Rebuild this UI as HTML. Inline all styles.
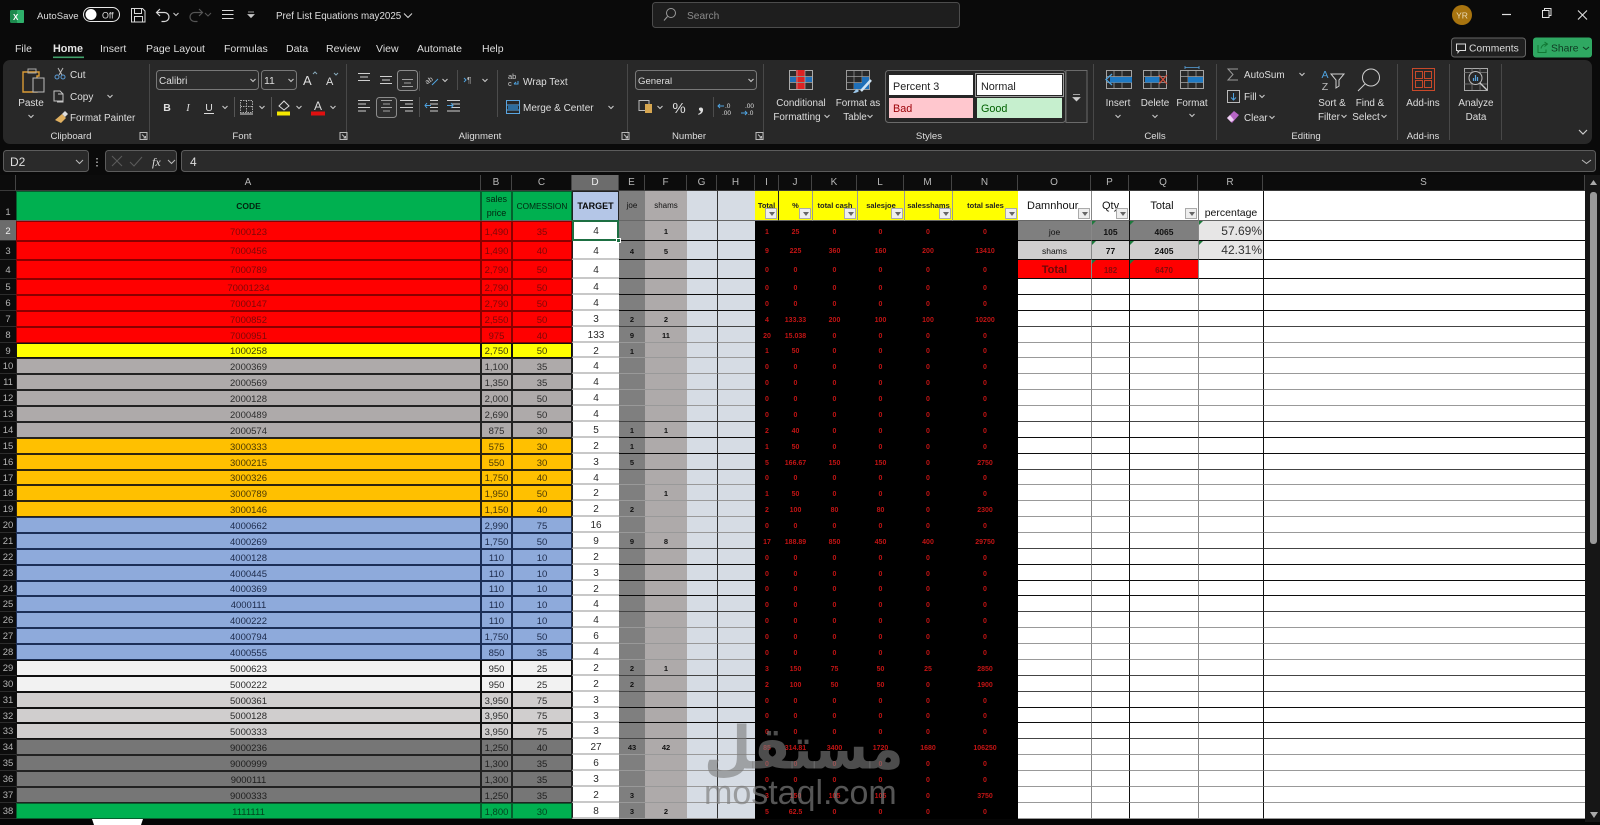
<!DOCTYPE html>
<html><head><meta charset="utf-8"><title>Pref List Equations may2025</title>
<style>
html,body{margin:0;padding:0;background:#0a0a0a;width:1600px;height:825px;overflow:hidden;font-family:"Liberation Sans",sans-serif}
svg{position:absolute;left:0;top:0}
svg text{font-family:"Liberation Sans",sans-serif;fill:#dedede;font-size:10.2px}
.m{text-anchor:middle}
.r{position:absolute;left:0;width:1585px;display:grid;grid-template-columns:16px 465px 31px 60px 47px 26px 42px 30px 38px 24px 33px 45px 47px 48px 66px 73px 38px 69px 65px 322px}
.r i{font-style:normal;display:flex;align-items:center;justify-content:center;overflow:hidden;box-sizing:border-box;min-width:0;position:relative;white-space:nowrap;border-bottom:1px solid var(--b);font-size:9.5px}
.k{--b:#0c0c0c}.d{--b:#444}.g{--b:#999}
.r i:nth-child(1){background:#0c0c0c;color:#b4b4b4;border-bottom:1px solid #2c2c2c;font-size:9.5px;padding-top:2px}
.r i:nth-child(2),.r i:nth-child(3),.r i:nth-child(4){background:var(--f);color:var(--t);border:1px solid var(--e);padding-top:2px}
.r i:nth-child(5){background:#fff;color:#2a2a2a;font-size:10px;border-bottom:2px solid #c8c8c8;border-left:1px solid #222;padding-top:3px}
.r i:nth-child(6){background:#7f7f7f;color:#111;font-size:7.5px;font-weight:bold;padding-top:2px}
.r i:nth-child(7){background:#aeaaaa;color:#111;font-size:7.5px;font-weight:bold;padding-top:2px}
.r i:nth-child(8){background:#d6dce4}
.r i:nth-child(9){background:#d6dce4;border-left:1px solid #333}
.r i:nth-child(n+10):nth-child(-n+15){background:#000;color:#c21414;font-size:7px;font-weight:bold;border-bottom:0;padding-top:2px}
.r i:nth-child(n+16){background:#fff;color:#111;padding-top:2px}
.r i:nth-child(17),.r i:nth-child(19){border-left:1px solid #888}
.r i:nth-child(18),.r i:nth-child(20){border-left:1px solid #111}
.re{--f:#f00;--t:#7c0808;--e:#8a0000}
.ye{--f:#ff0;--t:#3c3c08;--e:#111}
.gr{--f:#aeaaaa;--t:#2c2c2c;--e:#222}
.am{--f:#ffc000;--t:#4a3804;--e:#2c2410}
.bl{--f:#8eaadb;--t:#1c2a4a;--e:#1c2f57}
.li{--f:#f2f2f2;--t:#2a2a2a;--e:#111}
.lg{--f:#d0cece;--t:#2a2a2a;--e:#111}
.dg{--f:#767676;--t:#1e1e1e;--e:#222}
.gn{--f:#00b050;--t:#03451f;--e:#05602e}
.c i{border-bottom:1px solid #3a3a3a!important;background:#0c0c0c!important;color:#b8b8b8!important;font-size:10px!important;font-weight:normal!important;border-top:0!important;border-left:0!important;border-right:1px solid #444!important;padding:0!important}
.h i{border-bottom:1px solid #666!important;padding-top:0!important}
.f{position:absolute;right:1px;bottom:1px;width:12px;height:11px;background:#eee;border:1px solid #aaa;box-sizing:border-box}
.f:after{content:"";position:absolute;left:3px;top:3px;border:3px solid transparent;border-top:4px solid #666;border-bottom:0}
.t:before{content:"";position:absolute;left:0;top:0;border-top:4px solid #1d7a3c;border-right:4px solid transparent}
.wm{position:absolute;left:704px;white-space:nowrap;pointer-events:none}
</style></head><body>

<svg width="1600" height="825" viewBox="0 0 1600 825">
<defs><path id="c" d="M-2.500-1l2.500 2.500 2.500-2.500" fill="none" stroke="#c8c8c8" stroke-width="1.100"/></defs>
<!-- title bar -->
<rect x="10" y="10" width="14" height="13" rx="1.5" fill="#1d8a4e"/><rect x="17" y="10" width="7" height="13" rx="1" fill="#2fb06b"/>
<text x="13" y="20" style="font-size:8px;font-weight:bold;fill:#fff">X</text>
<text x="37" y="19" style="font-size:9.6px">AutoSave</text>
<rect x="83.500" y="7.500" width="36" height="14" rx="7" fill="none" stroke="#e8e8e8"/><circle cx="91" cy="14.500" r="5.500" fill="#fff"/>
<text x="102" y="18.500" style="font-size:8.800px">Off</text>
<path d="M131.500 8.500h11l2.500 2.500v11h-13.500zM134.500 8.500v5h7v-5M134.500 22v-5.500h8v5.500" fill="none" stroke="#d8d8d8"/>
<path d="M160 9l-3.500 3.500 3.500 3.500M156.500 12.500h8a4.500 4.500 0 0 1 0 9h-3" fill="none" stroke="#d8d8d8" stroke-width="1.200"/>
<use href="#c" x="176" y="14"/>
<path d="M199 9l3.500 3.500-3.500 3.500M202.500 12.500h-8a4.500 4.500 0 0 0 0 9h3" fill="none" stroke="#555" stroke-width="1.200"/>
<path d="M205 13l3 3 3-3" fill="none" stroke="#555"/>
<path d="M222 10.500h11.500M222 14.500h11.500M222 18.500h11.500" stroke="#d8d8d8" fill="none"/>
<path d="M248 12h6M248 14.500l3 3 3-3z" stroke="#c8c8c8" fill="#c8c8c8" stroke-width=".8"/>
<text x="276" y="19" style="font-size:9.800px">Pref List Equations may2025</text>
<path d="M404 13.500l4 4 4-4" fill="none" stroke="#d8d8d8"/>
<rect x="652.500" y="2.500" width="307" height="25" rx="3" fill="#1e1e1e" stroke="#4c4c4c"/>
<circle cx="671" cy="13" r="4.500" fill="none" stroke="#9a9a9a"/><path d="M667.500 16.500l-3.500 4" stroke="#9a9a9a"/>
<text x="687" y="19" style="font-size:10.200px;fill:#8c8c8c">Search</text>
<circle cx="1462" cy="15" r="10" fill="#a8740f"/><text x="1462" y="18.500" class="m" style="font-size:8.500px;fill:#eadbb8">YR</text>
<path d="M1502 14.500h9" stroke="#e0e0e0" stroke-width="1.200"/>
<path d="M1542.500 10.500h6.500v7h-6.500zM1544.500 10.500v-2h6.500v7h-2" fill="none" stroke="#e0e0e0"/>
<path d="M1578 10.500l9 9M1587 10.500l-9 9" stroke="#e0e0e0" stroke-width="1.100"/>
<!-- tabs -->
<g style="font-size:10.500px">
<text x="15" y="52" style="font-size:10.500px">File</text>
<text x="53" y="52" style="font-size:10.800px;font-weight:bold;fill:#e6e6e6">Home</text>
<text x="100" y="52" style="font-size:10.500px">Insert</text>
<text x="146" y="52" style="font-size:10.500px">Page Layout</text>
<text x="224" y="52" style="font-size:10.500px">Formulas</text>
<text x="286" y="52" style="font-size:10.500px">Data</text>
<text x="326" y="52" style="font-size:10.500px">Review</text>
<text x="376" y="52" style="font-size:10.500px">View</text>
<text x="417" y="52" style="font-size:10.500px">Automate</text>
<text x="482" y="52" style="font-size:10.500px">Help</text>
</g>
<rect x="53" y="56.500" width="31" height="1.600" fill="#41a06a"/>
<rect x="1451.500" y="38" width="74" height="19" rx="3" fill="#202020" stroke="#666"/>
<path d="M1456.500 44h9v6.500h-6l-1.500 2v-2h-1.500z" fill="none" stroke="#ddd"/><text x="1469" y="51.500" style="font-size:10.300px">Comments</text>
<rect x="1533" y="37.500" width="59" height="20" rx="3" fill="#2fa862"/>
<path d="M1538 45v7.500h8v-3M1541 48.500c.5-3 3-4.500 5.500-4.500M1544.500 42l3 2-3 2.500" fill="none" stroke="#173"/>
<text x="1551" y="51.500" style="font-size:10.300px;fill:#0f3a22">Share</text>
<path d="M1583 47l3 2.500 3-2.500" fill="none" stroke="#0f3a22"/>
<!-- ribbon -->
<rect x="3" y="60" width="1589" height="84" rx="7" fill="#282828"/>
<g stroke="#484848"><path d="M149.500 64v76M346.500 64v76M627.500 64v76M763.500 64v76M1093.500 64v76M1216.500 64v76M1397.500 64v76M1449.500 64v76M1501.500 64v76"/></g>
<!-- clipboard -->
<path d="M25 72h14v4h-2v16h-14v-20z" fill="none" stroke="#d99a35" stroke-width="1.400"/>
<rect x="28" y="69" width="8" height="4" fill="none" stroke="#aaa"/>
<rect x="33" y="78" width="11" height="14" fill="#2a2a2a" stroke="#bdbdbd"/>
<text x="31" y="106" class="m" style="font-size:10px">Paste</text><use href="#c" x="31" y="116"/>
<path d="M58 68l4 7M63 68l-4 7" stroke="#bbb" fill="none"/><circle cx="57" cy="77" r="2" fill="none" stroke="#5b9bd5"/><circle cx="63" cy="77" r="2" fill="none" stroke="#5b9bd5"/>
<text x="70" y="78" style="font-size:10px">Cut</text>
<path d="M54 91h6l3 3v7h-9zM58 94h5v8h-6" fill="none" stroke="#c4c4c4"/>
<text x="70" y="100" style="font-size:10px">Copy</text><use href="#c" x="110" y="96"/>
<path d="M55 120l7-6 4 4-5 5z" fill="#e0b060"/><path d="M62 114l3-3 3 3-3 3" fill="#ddd"/>
<text x="70" y="121" style="font-size:9.900px">Format Painter</text>
<text x="71" y="139" class="m" style="font-size:9.600px">Clipboard</text>
<g id="lc" fill="none" stroke="#bbb"><path d="M140 132.500h7v7h-7zM142 134.500l3.500 3.500M145.500 136v2h-2"/></g>
<!-- font -->
<rect x="156.500" y="70.500" width="102" height="19" rx="3" fill="#2c2c2c" stroke="#787878"/>
<text x="159" y="84" style="font-size:10px">Calibri</text><use href="#c" x="253" y="80"/>
<rect x="261.500" y="70.500" width="35" height="19" rx="3" fill="#2c2c2c" stroke="#787878"/>
<text x="264" y="84" style="font-size:10.500px">11</text><use href="#c" x="291" y="80"/>
<text x="303" y="85" style="font-size:13px">A</text><path d="M313 74l2-2 2 2" stroke="#8ab" fill="none"/>
<text x="326" y="85" style="font-size:11px">A</text><path d="M334 73l2 2 2-2" stroke="#8ab" fill="none"/>
<text x="167" y="111" class="m" style="font-size:10.500px;font-weight:bold">B</text>
<text x="188" y="111" class="m" style="font-size:10.500px;font-style:italic;font-family:'Liberation Serif'">I</text>
<text x="209" y="111" class="m" style="font-size:10.500px">U</text><path d="M204 113.500h10" stroke="#ddd"/><use href="#c" x="225" y="107"/>
<path d="M234.500 97v20M271.500 97v20" stroke="#555"/>
<path d="M240.500 100.500h12v12h-12zM246.500 100.500v12M240.500 106.500h12" stroke="#aaa" stroke-dasharray="1.500 1" fill="none"/><path d="M240 114h13" stroke="#ddd"/>
<use href="#c" x="262" y="107"/>
<path d="M279 106l5-5 5 5-5 4z" fill="none" stroke="#ddd"/><rect x="277" y="111.500" width="13" height="4" fill="#f5e800"/><use href="#c" x="299" y="107"/>
<text x="318" y="110" class="m" style="font-size:12px">A</text><rect x="311" y="111.500" width="14" height="4" fill="#e01010"/><use href="#c" x="333" y="107"/>
<text x="242" y="139" class="m" style="font-size:9.600px">Font</text>
<use href="#lc" x="200"/>
<!-- align -->
<g stroke="#cfcfcf" fill="none">
<path d="M358 73.500h12M360 77h8M358 80.500h12"/>
<path d="M380 76.500h12M382 80h8M380 83.500h12"/>
<path d="M402 79.500h11M404 83h7M402 86.500h11"/>
<path d="M358 100.500h12M358 104h8M358 107.500h12M358 111h8"/>
<path d="M381 100.500h11M383 104h7M381 107.500h11M383 111h7"/>
<path d="M400 100.500h13M405 104h8M400 107.500h13M405 111h8"/>
<path d="M430 100.500h8M430 104h8M430 107.500h8M430 111h8M447 100.500h13M452 104h8M452 107.500h8M447 111h13"/>
</g>
<rect x="397.500" y="70.500" width="20" height="20" rx="3" fill="#3a3a3a" fill-opacity=".3" stroke="#8c8c8c"/>
<rect x="376.500" y="97.500" width="20" height="20" rx="3" fill="#3a3a3a" fill-opacity=".3" stroke="#8c8c8c"/>
<path d="M425 105.500h6M427 103l-2 2.500 2 2.500M447 105.500h6M451 103l2 2.500-2 2.500" stroke="#4fa3e0" fill="none"/>
<path d="M419.500 71v20M419.500 97v20M457.500 70v20M497.500 70v47" stroke="#4c4c4c"/>
<text x="425" y="82" style="font-size:7px;fill:#cfcfcf" transform="rotate(-35 430 80)">ab</text><path d="M432 85l6-6" stroke="#4fa3e0"/><use href="#c" x="445" y="80"/>
<path d="M464 78l2 2-2 2" stroke="#4fa3e0" fill="none"/><text x="467" y="83" style="font-size:8px;fill:#bbb">¶</text><use href="#c" x="485" y="80"/>
<text x="508" y="79" style="font-size:7.500px;fill:#cfcfcf">ab</text><text x="508" y="86" style="font-size:7.500px;fill:#cfcfcf">c</text><path d="M514 84h4v-3M514 84l2-2" stroke="#4fa3e0" fill="none"/>
<text x="523" y="85" style="font-size:10px">Wrap Text</text>
<rect x="506.500" y="100.500" width="13" height="13" fill="none" stroke="#5aa5e0"/><path d="M506 105h13M506 110h13" stroke="#5aa5e0"/><rect x="508" y="105" width="10" height="5" fill="#2d6d9f"/>
<text x="523" y="111" style="font-size:10px">Merge &amp; Center</text><use href="#c" x="611" y="107"/>
<text x="480" y="139" class="m" style="font-size:9.600px">Alignment</text>
<use href="#lc" x="482"/>
<!-- number -->
<rect x="635.500" y="70.500" width="121" height="19" rx="3" fill="#2c2c2c" stroke="#787878"/>
<text x="638" y="84" style="font-size:9.600px">General</text><use href="#c" x="751" y="80"/>
<rect x="639" y="100.500" width="10" height="10" fill="none" stroke="#bbb"/><rect x="645" y="104" width="7" height="9" fill="#d6a650"/>
<use href="#c" x="660" y="107"/>
<text x="679" y="113" class="m" style="font-size:15px">%</text>
<text x="701" y="111" class="m" style="font-size:24px;font-weight:bold;font-family:'Liberation Serif'">,</text>
<path d="M713.500 97v20" stroke="#4c4c4c"/>
<text x="725" y="108" style="font-size:6.500px">.0</text><text x="722" y="115" style="font-size:6.500px">.00</text><path d="M718 106h6M720 104l-2 2 2 2" stroke="#4fa3e0" fill="none"/>
<text x="745" y="108" style="font-size:6.500px">.00</text><text x="748" y="115" style="font-size:6.500px">.0</text><path d="M741 113h6M745 111l2 2-2 2" stroke="#4fa3e0" fill="none"/>
<text x="689" y="139" class="m" style="font-size:9.600px">Number</text>
<use href="#lc" x="616"/>
<!-- styles -->
<rect x="789.500" y="70.500" width="23" height="19" fill="#2c2c2c" stroke="#aaa"/>
<rect x="796" y="70" width="9" height="6" fill="#d22"/><rect x="790" y="77" width="22" height="5" fill="#1f6fb8"/><rect x="796" y="77" width="9" height="5" fill="#d22"/><rect x="796" y="83" width="9" height="6" fill="#d22"/>
<path d="M797 70v19M805 70v19M790 76.500h22M790 82.500h22" stroke="#aaa" stroke-width=".7"/>
<text x="801" y="106" class="m" style="font-size:9.900px">Conditional</text>
<text x="797" y="120" class="m" style="font-size:9.900px">Formatting</text><use href="#c" x="827" y="116"/>
<rect x="846.500" y="70.500" width="23" height="19" fill="none" stroke="#9a9a9a"/><path d="M854 70v19M862 70v19M846 76.500h23M846 82.500h23" stroke="#9a9a9a" stroke-width=".7"/>
<rect x="862" y="77" width="7" height="12" fill="#1f6fb8"/><rect x="854" y="83" width="8" height="6" fill="#1f6fb8"/>
<path d="M871 80l-10 11" stroke="#cfe4f5" stroke-width="2.500"/><path d="M857 89c-2 1-3 3-4 4 3 0 5-1 6-2z" fill="#9cc7ea"/>
<text x="858" y="106" class="m" style="font-size:9.900px">Format as</text>
<text x="855" y="120" class="m" style="font-size:9.900px">Table</text><use href="#c" x="870" y="116"/>
<rect x="885.500" y="70.500" width="180" height="52" rx="3" fill="#262626" stroke="#6a6a6a"/>
<rect x="1066" y="70.500" width="21" height="52" fill="#2a2a2a" stroke="#6a6a6a"/>
<path d="M1073 94.500h7M1073 97.500h7l-3.500 3.500z" stroke="#ccc" fill="#ccc" stroke-width=".7"/>
<rect x="889" y="75" width="84" height="20" fill="#fff"/>
<rect x="975.500" y="73.500" width="88" height="23" fill="none" stroke="#9c9c9c"/>
<rect x="977" y="75" width="85" height="20" fill="#fff"/>
<rect x="889" y="98" width="84" height="20" fill="#ffc7ce"/>
<rect x="977" y="98" width="85" height="20" fill="#c6efce"/>
<text x="893" y="90" style="font-size:10.800px;fill:#222">Percent 3</text>
<text x="981" y="90" style="font-size:10.800px;fill:#222">Normal</text>
<text x="893" y="112" style="font-size:10.800px;fill:#9c0006">Bad</text>
<text x="981" y="112" style="font-size:10.800px;fill:#006100">Good</text>
<text x="929" y="139" class="m" style="font-size:9.600px">Styles</text>
<!-- cells -->
<rect x="1106.500" y="70.500" width="25" height="18" fill="none" stroke="#a4a4a4"/><path d="M1114 70v18M1122 70v18M1106 76.500h25M1106 82.500h25" stroke="#a4a4a4" stroke-width=".7"/>
<rect x="1110" y="77" width="22" height="5.500" fill="#1f7ac4"/><path d="M1112 74l-6 5.500 6 5.500" fill="none" stroke="#4fa3e0" stroke-width="1.300"/>
<text x="1118" y="106" class="m" style="font-size:9.900px">Insert</text><use href="#c" x="1118" y="116"/>
<rect x="1143.500" y="70.500" width="23" height="18" fill="none" stroke="#a4a4a4"/><path d="M1151 70v18M1159 70v18M1143 76.500h23M1143 82.500h23" stroke="#a4a4a4" stroke-width=".7"/>
<rect x="1145" y="77" width="14" height="5.500" fill="#1f7ac4"/><path d="M1159 75l8 9M1167 75l-8 9" stroke="#d8503c" stroke-width="1.200"/>
<text x="1155" y="106" class="m" style="font-size:9.900px">Delete</text><use href="#c" x="1155" y="116"/>
<path d="M1185 67.500h14M1185 66v3M1199 66v3" stroke="#5aa5e0" stroke-width=".8"/>
<rect x="1180.500" y="70.500" width="23" height="18" fill="none" stroke="#a4a4a4"/><path d="M1188 70v18M1196 70v18M1180 76.500h23M1180 82.500h23" stroke="#a4a4a4" stroke-width=".7"/>
<rect x="1188" y="77" width="15" height="5.500" fill="#1f7ac4"/>
<text x="1192" y="106" class="m" style="font-size:9.900px">Format</text><use href="#c" x="1192" y="115"/>
<text x="1155" y="139" class="m" style="font-size:9.600px">Cells</text>
<!-- editing -->
<path d="M1238 69h-10l5 5.500-5 5.500h10" fill="none" stroke="#9a9a9a"/>
<text x="1244" y="78" style="font-size:9.900px">AutoSum</text><use href="#c" x="1302" y="74"/>
<rect x="1227.500" y="90.500" width="12" height="12" fill="none" stroke="#bbb"/><path d="M1233.500 93v7M1231 97.500l2.500 2.500 2.500-2.500" fill="none" stroke="#4fa3e0"/>
<text x="1244" y="100" style="font-size:9.900px">Fill</text><use href="#c" x="1262" y="96"/>
<path d="M1227 118l7-7 5 4-7 8z" fill="#b765c5"/><path d="M1231 122l-4-4 3-3 4 5z" fill="#eecff2"/>
<text x="1244" y="121" style="font-size:9.900px">Clear</text><use href="#c" x="1272" y="117"/>
<text x="1325" y="78" class="m" style="font-size:10.500px;fill:#4fa3e0">A</text><text x="1325" y="90" class="m" style="font-size:10.500px;fill:#bbb">Z</text>
<path d="M1331 74h13l-5 6v6l-3 2v-8z" fill="none" stroke="#cfcfcf"/>
<text x="1332" y="106" class="m" style="font-size:9.900px">Sort &amp;</text>
<text x="1329" y="120" class="m" style="font-size:9.900px">Filter</text><use href="#c" x="1344" y="116"/>
<circle cx="1371" cy="77.500" r="8.500" fill="none" stroke="#cfcfcf"/><path d="M1365 84l-7 7" stroke="#cfcfcf"/>
<text x="1370" y="106" class="m" style="font-size:9.900px">Find &amp;</text>
<text x="1366" y="120" class="m" style="font-size:9.900px">Select</text><use href="#c" x="1384" y="116"/>
<text x="1306" y="139" class="m" style="font-size:9.600px">Editing</text>
<!-- add-ins -->
<rect x="1412.500" y="68.500" width="22" height="22" fill="none" stroke="#c8492a"/><rect x="1415.500" y="71.500" width="7" height="7" fill="none" stroke="#c8492a"/><rect x="1424.500" y="71.500" width="7" height="7" fill="none" stroke="#c8492a"/><rect x="1415.500" y="80.500" width="7" height="7" fill="none" stroke="#c8492a"/><rect x="1424.500" y="80.500" width="7" height="7" fill="none" stroke="#c8492a"/>
<text x="1423" y="106" class="m" style="font-size:9.900px">Add-ins</text>
<text x="1423" y="139" class="m" style="font-size:9.600px">Add-ins</text>
<rect x="1464.500" y="68.500" width="23" height="22" fill="none" stroke="#a8a8a8"/><path d="M1464 72.500h23M1464 84h23M1472 68v22M1480 68v22" stroke="#808080" stroke-width=".7"/>
<circle cx="1475.500" cy="78" r="6.500" fill="#282828" stroke="#bbb"/><path d="M1473.500 81v-3M1475.500 81v-6M1477.500 81v-4" stroke="#5aa5e0" stroke-width="1.200"/><path d="M1480 83l7 7" stroke="#ccc" stroke-width="1.300"/>
<text x="1476" y="106" class="m" style="font-size:9.900px">Analyze</text>
<text x="1476" y="120" class="m" style="font-size:9.900px">Data</text>
<path d="M1579 130l4 4 4-4" fill="none" stroke="#ccc" stroke-width="1.200"/>
<!-- formula bar -->
<rect x="3.500" y="150.500" width="85" height="21" rx="3" fill="#2a2a2a" stroke="#5c5c5c"/>
<text x="10" y="166" style="font-size:12px">D2</text><path d="M76 160l3.500 3.500 3.500-3.500" fill="none" stroke="#bbb"/>
<path d="M97 158v1.500M97 161.500v1.500M97 165v1.500" stroke="#ccc" stroke-width="1.300"/>
<rect x="105.500" y="150.500" width="71" height="21" rx="3" fill="#2a2a2a" stroke="#5c5c5c"/>
<path d="M112 156l10 10M122 156l-10 10" stroke="#5c5c5c"/><path d="M130 162l4 4 8-9" fill="none" stroke="#5c5c5c"/>
<text x="152" y="166" style="font-size:12px;font-style:italic;font-family:'Liberation Serif';fill:#ddd">fx</text><path d="M168 160l3.500 3.500 3.500-3.500" fill="none" stroke="#bbb"/>
<rect x="181.500" y="150.500" width="1414" height="21" rx="3" fill="#2a2a2a" stroke="#5c5c5c"/>
<text x="190" y="166" style="font-size:12px">4</text>
<path d="M1582 160l4.500 3.500 4.500-3.500" fill="none" stroke="#bbb"/>
<!-- corner + scrollbar -->
<path d="M14 179v10h-9z" fill="#777"/>
<rect x="1585" y="175" width="15" height="647" fill="#161616"/>
<path d="M1593.500 180l3.500 5h-7z" fill="#aaa"/>
<rect x="1590" y="192" width="7" height="352" rx="3" fill="#9a9a9a"/>
<path d="M1590 812h8l-4 6z" fill="#aaa"/>
<rect x="0" y="819" width="1585" height="6" fill="#050505"/>
<rect x="1585" y="822" width="15" height="3" fill="#050505"/>
<path d="M92 819h51l-2 6h-47z" fill="#fff"/>
</svg>

<div class="r c" style="top:175px;height:16px"><i></i><i>A</i><i>B</i><i>C</i><i style="background:#6c6c6c!important;color:#eee!important">D</i><i>E</i><i>F</i><i>G</i><i>H</i><i>I</i><i>J</i><i>K</i><i>L</i><i>M</i><i>N</i><i>O</i><i>P</i><i>Q</i><i>R</i><i>S</i></div>

<div class="r h gn g" style="top:191px;height:30px">
<i style="align-items:flex-end;padding-bottom:2px">1</i>
<i style="font-size:8.500px;color:#02240f;font-weight:bold">CODE</i>
<i style="font-size:9px;line-height:14px;white-space:normal;text-align:center;color:#02240f">sales price</i>
<i style="font-size:8.300px;color:#02240f">COMESSION</i>
<i style="background:#b4c6e7;border:1px solid #222;font-size:9px;color:#0a0a0a;font-weight:bold">TARGET</i>
<i style="font-size:8px;font-weight:normal">joe</i>
<i style="font-size:8px;font-weight:normal">shams</i>
<i></i><i></i>
<i style="background:#ff0;color:#222;border-right:1px solid #222;font-size:7.500px">Total<b class="f"></b></i>
<i style="background:#ff0;color:#222;font-size:7.500px">%<b class="f"></b></i>
<i style="background:#ff0;color:#222;border-left:1px solid #999;font-size:7.500px">total cash<b class="f"></b></i>
<i style="background:#ff0;color:#222;border-left:1px solid #999;font-size:7.500px">salesjoe<b class="f"></b></i>
<i style="background:#ff0;color:#222;border-left:1px solid #999;font-size:7.500px">salesshams<b class="f"></b></i>
<i style="background:#ff0;color:#222;border-left:1px solid #999;font-size:7.500px">total sales<b class="f"></b></i>
<i style="font-size:11px;justify-content:flex-start;padding-left:9px;color:#111">Damnhour<b class="f"></b></i>
<i style="font-size:11px;justify-content:flex-start;padding-left:10px;color:#111">Qty<b class="f"></b></i>
<i style="font-size:11px;padding-right:4px;color:#111">Total<b class="f"></b></i>
<i style="font-size:10.500px;align-items:flex-end;padding-bottom:1px;color:#111">percentage</i>
<i></i></div>

<div class="r re k" style="top:221px;height:20px"><i style="background:#6c6c6c;color:#eee">2</i><i>7000123</i><i>1,490</i><i>35</i><i>4</i><i></i><i>1</i><i></i><i></i><i>1</i><i>25</i><i>0</i><i>0</i><i>0</i><i>0</i><i style="background:#7f7f7f;font-size:8.500px">joe</i><i class="t" style="background:#7f7f7f;font-size:8.500px;font-weight:bold;color:#111">105</i><i class="t" style="background:#7f7f7f;font-size:8.500px;font-weight:bold;color:#111">4065</i><i class="t" style="background:#e7e6e6;font-size:12px;justify-content:flex-end;padding:0 1px 0 0;color:#333">57.69%</i><i></i></div>
<div class="r re k" style="top:241px;height:19px"><i>3</i><i>7000456</i><i>1,490</i><i>40</i><i>4</i><i>4</i><i>5</i><i></i><i></i><i>9</i><i>225</i><i>360</i><i>160</i><i>200</i><i>13410</i><i style="background:#d0cece;font-size:8.500px">shams</i><i class="t" style="background:#d0cece;font-size:8.500px;font-weight:bold;color:#111">77</i><i class="t" style="background:#d0cece;font-size:8.500px;font-weight:bold;color:#111">2405</i><i class="t" style="background:#e7e6e6;font-size:12px;justify-content:flex-end;padding:0 1px 0 0;color:#333">42.31%</i><i></i></div>
<div class="r re k" style="top:260px;height:19px"><i>4</i><i>7000789</i><i>2,790</i><i>50</i><i>4</i><i></i><i></i><i></i><i></i><i>0</i><i>0</i><i>0</i><i>0</i><i>0</i><i>0</i><i style="background:#f00;color:#6a0808;font-size:11px;font-weight:bold">Total</i><i class="t" style="background:#f00;color:#860a0a;font-size:8px;font-weight:bold">182</i><i class="t" style="background:#f00;color:#860a0a;font-size:8px;font-weight:bold">6470</i><i></i><i></i></div>
<div class="r re k" style="top:279px;height:16px"><i>5</i><i>70001234</i><i>2,790</i><i>50</i><i>4</i><i></i><i></i><i></i><i></i><i>0</i><i>0</i><i>0</i><i>0</i><i>0</i><i>0</i><i></i><i></i><i></i><i></i><i></i></div>
<div class="r re k" style="top:295px;height:16px"><i>6</i><i>7000147</i><i>2,790</i><i>50</i><i>4</i><i></i><i></i><i></i><i></i><i>0</i><i>0</i><i>0</i><i>0</i><i>0</i><i>0</i><i></i><i></i><i></i><i></i><i></i></div>
<div class="r re d" style="top:311px;height:16px"><i>7</i><i>7000852</i><i>2,550</i><i>50</i><i>3</i><i>2</i><i>2</i><i></i><i></i><i>4</i><i>133.33</i><i>200</i><i>100</i><i>100</i><i>10200</i><i></i><i></i><i></i><i></i><i></i></div>
<div class="r re g" style="top:327px;height:16px"><i>8</i><i>7000951</i><i>975</i><i>40</i><i>133</i><i>9</i><i>11</i><i></i><i></i><i>20</i><i>15.038</i><i>0</i><i>0</i><i>0</i><i>0</i><i></i><i></i><i></i><i></i><i></i></div>
<div class="r ye g" style="top:343px;height:15px"><i>9</i><i>1000258</i><i>2,750</i><i>50</i><i>2</i><i>1</i><i></i><i></i><i></i><i>1</i><i>50</i><i>0</i><i>0</i><i>0</i><i>0</i><i></i><i></i><i></i><i></i><i></i></div>
<div class="r gr g" style="top:358px;height:16px"><i>10</i><i>2000369</i><i>1,100</i><i>35</i><i>4</i><i></i><i></i><i></i><i></i><i>0</i><i>0</i><i>0</i><i>0</i><i>0</i><i>0</i><i></i><i></i><i></i><i></i><i></i></div>
<div class="r gr g" style="top:374px;height:16px"><i>11</i><i>2000569</i><i>1,350</i><i>35</i><i>4</i><i></i><i></i><i></i><i></i><i>0</i><i>0</i><i>0</i><i>0</i><i>0</i><i>0</i><i></i><i></i><i></i><i></i><i></i></div>
<div class="r gr g" style="top:390px;height:16px"><i>12</i><i>2000128</i><i>2,000</i><i>50</i><i>4</i><i></i><i></i><i></i><i></i><i>0</i><i>0</i><i>0</i><i>0</i><i>0</i><i>0</i><i></i><i></i><i></i><i></i><i></i></div>
<div class="r gr d" style="top:406px;height:16px"><i>13</i><i>2000489</i><i>2,690</i><i>50</i><i>4</i><i></i><i></i><i></i><i></i><i>0</i><i>0</i><i>0</i><i>0</i><i>0</i><i>0</i><i></i><i></i><i></i><i></i><i></i></div>
<div class="r gr k" style="top:422px;height:16px"><i>14</i><i>2000574</i><i>875</i><i>30</i><i>5</i><i>1</i><i>1</i><i></i><i></i><i>2</i><i>40</i><i>0</i><i>0</i><i>0</i><i>0</i><i></i><i></i><i></i><i></i><i></i></div>
<div class="r am k" style="top:438px;height:16px"><i>15</i><i>3000333</i><i>575</i><i>30</i><i>2</i><i>1</i><i></i><i></i><i></i><i>1</i><i>50</i><i>0</i><i>0</i><i>0</i><i>0</i><i></i><i></i><i></i><i></i><i></i></div>
<div class="r am d" style="top:454px;height:16px"><i>16</i><i>3000215</i><i>550</i><i>30</i><i>3</i><i>5</i><i></i><i></i><i></i><i>5</i><i>166.67</i><i>150</i><i>150</i><i>0</i><i>2750</i><i></i><i></i><i></i><i></i><i></i></div>
<div class="r am g" style="top:470px;height:15px"><i>17</i><i>3000326</i><i>1,750</i><i>40</i><i>4</i><i></i><i></i><i></i><i></i><i>0</i><i>0</i><i>0</i><i>0</i><i>0</i><i>0</i><i></i><i></i><i></i><i></i><i></i></div>
<div class="r am g" style="top:485px;height:16px"><i>18</i><i>3000789</i><i>1,950</i><i>50</i><i>2</i><i></i><i>1</i><i></i><i></i><i>1</i><i>50</i><i>0</i><i>0</i><i>0</i><i>0</i><i></i><i></i><i></i><i></i><i></i></div>
<div class="r am g" style="top:501px;height:16px"><i>19</i><i>3000146</i><i>1,150</i><i>40</i><i>2</i><i>2</i><i></i><i></i><i></i><i>2</i><i>100</i><i>80</i><i>80</i><i>0</i><i>2300</i><i></i><i></i><i></i><i></i><i></i></div>
<div class="r bl g" style="top:517px;height:16px"><i>20</i><i>4000662</i><i>2,990</i><i>75</i><i>16</i><i></i><i></i><i></i><i></i><i>0</i><i>0</i><i>0</i><i>0</i><i>0</i><i>0</i><i></i><i></i><i></i><i></i><i></i></div>
<div class="r bl d" style="top:533px;height:16px"><i>21</i><i>4000269</i><i>1,750</i><i>50</i><i>9</i><i>9</i><i>8</i><i></i><i></i><i>17</i><i>188.89</i><i>850</i><i>450</i><i>400</i><i>29750</i><i></i><i></i><i></i><i></i><i></i></div>
<div class="r bl k" style="top:549px;height:16px"><i>22</i><i>4000128</i><i>110</i><i>10</i><i>2</i><i></i><i></i><i></i><i></i><i>0</i><i>0</i><i>0</i><i>0</i><i>0</i><i>0</i><i></i><i></i><i></i><i></i><i></i></div>
<div class="r bl k" style="top:565px;height:16px"><i>23</i><i>4000445</i><i>110</i><i>10</i><i>3</i><i></i><i></i><i></i><i></i><i>0</i><i>0</i><i>0</i><i>0</i><i>0</i><i>0</i><i></i><i></i><i></i><i></i><i></i></div>
<div class="r bl k" style="top:581px;height:15px"><i>24</i><i>4000369</i><i>110</i><i>10</i><i>2</i><i></i><i></i><i></i><i></i><i>0</i><i>0</i><i>0</i><i>0</i><i>0</i><i>0</i><i></i><i></i><i></i><i></i><i></i></div>
<div class="r bl d" style="top:596px;height:16px"><i>25</i><i>4000111</i><i>110</i><i>10</i><i>4</i><i></i><i></i><i></i><i></i><i>0</i><i>0</i><i>0</i><i>0</i><i>0</i><i>0</i><i></i><i></i><i></i><i></i><i></i></div>
<div class="r bl g" style="top:612px;height:16px"><i>26</i><i>4000222</i><i>110</i><i>10</i><i>4</i><i></i><i></i><i></i><i></i><i>0</i><i>0</i><i>0</i><i>0</i><i>0</i><i>0</i><i></i><i></i><i></i><i></i><i></i></div>
<div class="r bl g" style="top:628px;height:16px"><i>27</i><i>4000794</i><i>1,750</i><i>50</i><i>6</i><i></i><i></i><i></i><i></i><i>0</i><i>0</i><i>0</i><i>0</i><i>0</i><i>0</i><i></i><i></i><i></i><i></i><i></i></div>
<div class="r bl g" style="top:644px;height:16px"><i>28</i><i>4000555</i><i>850</i><i>35</i><i>4</i><i></i><i></i><i></i><i></i><i>0</i><i>0</i><i>0</i><i>0</i><i>0</i><i>0</i><i></i><i></i><i></i><i></i><i></i></div>
<div class="r li d" style="top:660px;height:16px"><i>29</i><i>5000623</i><i>950</i><i>25</i><i>2</i><i>2</i><i>1</i><i></i><i></i><i>3</i><i>150</i><i>75</i><i>50</i><i>25</i><i>2850</i><i></i><i></i><i></i><i></i><i></i></div>
<div class="r li d" style="top:676px;height:16px"><i>30</i><i>5000222</i><i>950</i><i>25</i><i>2</i><i>2</i><i></i><i></i><i></i><i>2</i><i>100</i><i>50</i><i>50</i><i>0</i><i>1900</i><i></i><i></i><i></i><i></i><i></i></div>
<div class="r lg k" style="top:692px;height:16px"><i>31</i><i>5000361</i><i>3,950</i><i>75</i><i>3</i><i></i><i></i><i></i><i></i><i>0</i><i>0</i><i>0</i><i>0</i><i>0</i><i>0</i><i></i><i></i><i></i><i></i><i></i></div>
<div class="r lg k" style="top:708px;height:15px"><i>32</i><i>5000128</i><i>3,950</i><i>75</i><i>3</i><i></i><i></i><i></i><i></i><i>0</i><i>0</i><i>0</i><i>0</i><i>0</i><i>0</i><i></i><i></i><i></i><i></i><i></i></div>
<div class="r lg d" style="top:723px;height:16px"><i>33</i><i>5000333</i><i>3,950</i><i>75</i><i>3</i><i></i><i></i><i></i><i></i><i>0</i><i>0</i><i>0</i><i>0</i><i>0</i><i>0</i><i></i><i></i><i></i><i></i><i></i></div>
<div class="r dg g" style="top:739px;height:16px"><i>34</i><i>9000236</i><i>1,250</i><i>40</i><i>27</i><i>43</i><i>42</i><i></i><i></i><i>85</i><i>314.81</i><i>3400</i><i>1720</i><i>1680</i><i>106250</i><i></i><i></i><i></i><i></i><i></i></div>
<div class="r dg g" style="top:755px;height:16px"><i>35</i><i>9000999</i><i>1,300</i><i>35</i><i>6</i><i></i><i></i><i></i><i></i><i>0</i><i>0</i><i>0</i><i>0</i><i>0</i><i>0</i><i></i><i></i><i></i><i></i><i></i></div>
<div class="r dg g" style="top:771px;height:16px"><i>36</i><i>9000111</i><i>1,300</i><i>35</i><i>3</i><i></i><i></i><i></i><i></i><i>0</i><i>0</i><i>0</i><i>0</i><i>0</i><i>0</i><i></i><i></i><i></i><i></i><i></i></div>
<div class="r dg g" style="top:787px;height:16px"><i>37</i><i>9000333</i><i>1,250</i><i>35</i><i>2</i><i>3</i><i></i><i></i><i></i><i>3</i><i>150</i><i>105</i><i>105</i><i>0</i><i>3750</i><i></i><i></i><i></i><i></i><i></i></div>
<div class="r gn g" style="top:803px;height:16px"><i>38</i><i>1111111</i><i>1,800</i><i>30</i><i>8</i><i>3</i><i>2</i><i></i><i></i><i>5</i><i>62.5</i><i>0</i><i>0</i><i>0</i><i>0</i><i></i><i></i><i></i><i></i><i></i></div>

<div style="position:absolute;left:572px;top:220px;width:47px;height:21px;border:2px solid #1d6f42;box-sizing:border-box"></div>
<div style="position:absolute;left:616px;top:238px;width:5px;height:5px;background:#1d6f42;border:1px solid #fff;box-sizing:border-box"></div>

<div class="wm" style="top:708px;width:193px;text-align:center;font:bold 54.6px 'DejaVu Sans',sans-serif;line-height:80px;color:rgba(125,125,125,.62);transform:scaleY(1.08)">مستقل</div>
<div class="wm" style="top:774px;font:34px/38px 'Liberation Sans',sans-serif;color:rgba(125,125,125,.68)">mostaql.com</div>
</body></html>
